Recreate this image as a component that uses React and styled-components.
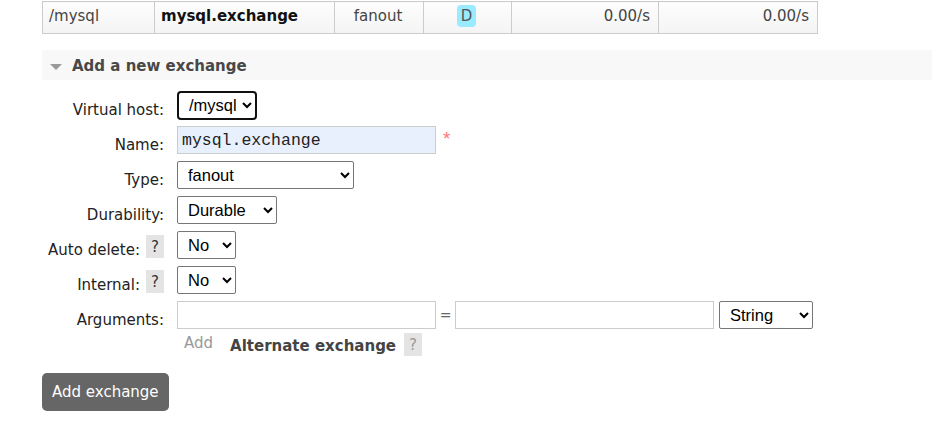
import React from "react";
import styled, { createGlobalStyle } from "styled-components";

const GlobalStyle = createGlobalStyle`
  html, body {
    margin: 0;
    padding: 0;
    background: #fff;
  }
  body {
    font-family: "DejaVu Sans", Verdana, sans-serif;
    font-size: 15px;
    color: #222;
  }
`;

const Page = styled.div`
  width: 932px;
  height: 430px;
  overflow: hidden;
  padding-left: 42px;
  box-sizing: border-box;
`;

const ListTable = styled.table`
  border-collapse: collapse;
  margin-top: 1px;
  font-size: 15px;
`;

const Cell = styled.td`
  width: ${(p) => p.$w}px;
  height: 32px;
  padding: 0 8px 3px 6px;
  box-sizing: border-box;
  border: 1px solid #ccc;
  background: linear-gradient(#fdfdfd, #f4f4f4);
  text-align: ${(p) => p.$align || "left"};
  font-weight: ${(p) => (p.$bold ? "bold" : "normal")};
  color: ${(p) => (p.$bold ? "#111" : "#444")};
  white-space: nowrap;
`;

const Badge = styled.span`
  display: inline-block;
  background: #99ebff;
  color: #555;
  border-radius: 4px;
  padding: 2px 4px;
  line-height: 18px;
`;

const SectionHeader = styled.div`
  margin-top: 16px;
  height: 30px;
  background: #f8f8f8;
  display: flex;
  align-items: center;
  gap: 10px;
  padding-left: 8px;
  padding-top: 2px;
  box-sizing: border-box;
  font-weight: bold;
  color: #484848;
  font-size: 15px;
`;

const Triangle = styled.span`
  width: 0;
  height: 0;
  border-left: 6px solid transparent;
  border-right: 6px solid transparent;
  border-top: 6px solid #999;
  margin-top: 1px;
`;

const Form = styled.div`
  margin-top: 11px;
  display: grid;
  grid-template-columns: 122px auto;
  column-gap: 13px;
  row-gap: 7px;
`;

const Label = styled.div`
  display: flex;
  justify-content: flex-end;
  align-items: center;
  gap: 6px;
  height: 28px;
  padding-top: 9px;
  box-sizing: border-box;
  white-space: nowrap;
`;

const Help = styled.span`
  display: inline-flex;
  align-items: center;
  justify-content: center;
  width: 18px;
  height: 23px;
  background: #e4e4e4;
  color: ${(p) => (p.$light ? "#999" : "#333")};
  font-size: 15px;
  font-weight: normal;
  margin-top: ${(p) => (p.$light ? "0" : "-6px")};
`;

const Control = styled.div`
  display: flex;
  align-items: center;
  gap: ${(p) => p.$gap || 0}px;
  height: 28px;
`;

const Select = styled.select`
  width: ${(p) => p.$w}px;
  height: ${(p) => (p.$focused ? 29 : 28)}px;
  font-family: Arial, "Liberation Sans", sans-serif;
  font-size: 16.5px;
  color: #000;
  background: #fff;
  border: ${(p) => (p.$focused ? "2px solid #111" : "1px solid #767676")};
  border-radius: ${(p) => (p.$focused ? "4px" : "2px")};
  padding: 0 2px 0 6px;
  box-sizing: border-box;
  outline: none;
`;

const TextInput = styled.input`
  width: 259px;
  height: 28px;
  box-sizing: border-box;
  border: 1px solid #ccc;
  background: ${(p) => (p.$filled ? "#e8f0fe" : "#fff")};
  font-family: "Liberation Mono", "Courier New", monospace;
  font-size: 16.5px;
  color: #222;
  padding: 0 4px;
  outline: none;
`;

const Required = styled.span`
  color: #f77;
  font-family: "Liberation Mono", monospace;
  font-size: 19px;
  line-height: 1;
  margin-left: 5px;
  align-self: flex-start;
  margin-top: 5px;
`;

const Equals = styled.span`
  color: #666;
  width: 19px;
  text-align: center;
  font-size: 14px;
`;

const SubRow = styled.div`
  grid-column: 2;
  display: flex;
  align-items: center;
  margin-top: -3px;
  height: 23px;
`;

const AddLink = styled.span`
  color: #999;
  margin-left: 7px;
  margin-right: 17px;
  margin-top: -3px;
`;

const AltLabel = styled.span`
  font-weight: bold;
  color: #444;
  margin-right: 8px;
  margin-top: 3px;
`;

const SubmitButton = styled.button`
  margin-top: 17px;
  height: 38px;
  padding: 0 10px;
  background: #666;
  color: #fff;
  border: none;
  border-radius: 5px;
  font-family: "DejaVu Sans", Verdana, sans-serif;
  font-size: 15px;
`;

export default function App() {
  return (
    <Page>
      <GlobalStyle />
      <ListTable>
        <tbody>
          <tr>
            <Cell $w={112}>/mysql</Cell>
            <Cell $w={180} $bold>mysql.exchange</Cell>
            <Cell $w={89} $align="center">fanout</Cell>
            <Cell $w={88} $align="center">
              <Badge>D</Badge>
            </Cell>
            <Cell $w={147} $align="right">0.00/s</Cell>
            <Cell $w={159} $align="right">0.00/s</Cell>
          </tr>
        </tbody>
      </ListTable>

      <SectionHeader>
        <Triangle />
        Add a new exchange
      </SectionHeader>

      <Form>
        <Label>Virtual host:</Label>
        <Control>
          <Select $w={80} $focused defaultValue="/mysql">
            <option>/mysql</option>
          </Select>
        </Control>

        <Label>Name:</Label>
        <Control>
          <TextInput $filled defaultValue="mysql.exchange" />
          <Required>*</Required>
        </Control>

        <Label>Type:</Label>
        <Control>
          <Select $w={177} defaultValue="fanout">
            <option>fanout</option>
          </Select>
        </Control>

        <Label>Durability:</Label>
        <Control>
          <Select $w={100} defaultValue="Durable">
            <option>Durable</option>
          </Select>
        </Control>

        <Label>
          Auto delete: <Help>?</Help>
        </Label>
        <Control>
          <Select $w={59} defaultValue="No">
            <option>No</option>
          </Select>
        </Control>

        <Label>
          Internal: <Help>?</Help>
        </Label>
        <Control>
          <Select $w={59} defaultValue="No">
            <option>No</option>
          </Select>
        </Control>

        <Label>Arguments:</Label>
        <Control>
          <TextInput />
          <Equals>=</Equals>
          <TextInput />
          <Select $w={94} defaultValue="String" style={{ marginLeft: 5 }}>
            <option>String</option>
          </Select>
        </Control>
        <SubRow>
          <AddLink>Add</AddLink>
          <AltLabel>Alternate exchange</AltLabel>
          <Help $light>?</Help>
        </SubRow>
      </Form>

      <SubmitButton>Add exchange</SubmitButton>
    </Page>
  );
}
